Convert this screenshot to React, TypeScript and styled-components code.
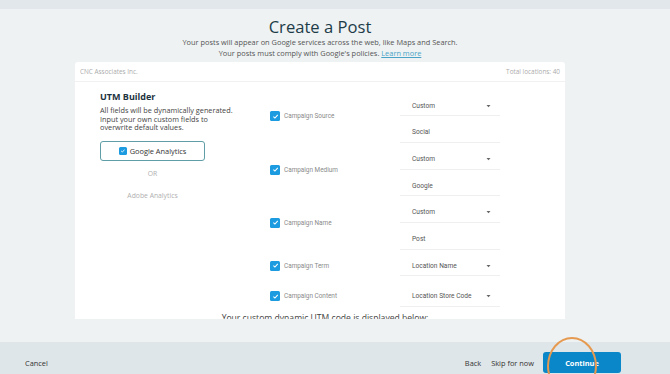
import React from "react";
import styled, { createGlobalStyle } from "styled-components";

const Global = createGlobalStyle`
  html, body { margin: 0; padding: 0; }
  body {
    width: 670px; height: 374px; overflow: hidden;
    background: #eef2f3;
    font-family: "Open Sans", "Liberation Sans", sans-serif;
  }
`;

const Page = styled.div`
  width: 670px; height: 374px; display: flex; flex-direction: column;
  position: relative; overflow: hidden;
`;

const TopBar = styled.div`
  height: 9px; background: #e1e7ea; flex: none;
`;

const Main = styled.main`
  flex: 1; display: flex; flex-direction: column; align-items: center;
  padding: 8px 30px 0 0; min-height: 0;
`;

const Title = styled.h1`
  margin: 0; font-size: 16.6px; line-height: 20px; font-weight: 400;
  color: #1d3c48;
`;

const Sub = styled.p`
  margin: 0; font-size: 7.4px; line-height: 11px; color: #555;
  a { color: #4aa3c6; text-decoration: underline; }
`;

const Card = styled.section`
  margin-top: 2.5px; width: 490px; height: 257px; background: #fff;
  border-radius: 3px 3px 0 0; overflow: hidden; display: flex; flex-direction: column;
`;

const CardHeader = styled.div`
  height: 19px; flex: none; border-bottom: 1px solid #f1f1f1;
  display: flex; align-items: center; justify-content: space-between;
  padding: 0 5px; font-size: 6.4px; color: #ababab;
`;

const Body = styled.div`
  display: flex; padding-top: 8px;
`;

const LeftCol = styled.div`
  width: 170px; padding-left: 25px; flex: none;
`;

const Heading = styled.h2`
  margin: 0; font-size: 9px; line-height: 13px; font-weight: 700; color: #1d3340;
`;

const Desc = styled.p`
  margin: 3.5px 0 0; font-size: 7.3px; line-height: 8.7px; color: #444;
`;

const Options = styled.div`
  width: 105px; display: flex; flex-direction: column; align-items: center;
  margin-top: 9px;
`;

const OptionBox = styled.div`
  width: 105px; height: 20px; box-sizing: border-box;
  border: 1.5px solid #5f9ea6; border-radius: 3px;
  display: flex; align-items: center; justify-content: center; gap: 3px;
  font-size: 7.4px; color: #333;
`;

const OptionText = styled.div<{ $gap: number }>`
  margin-top: ${(p) => p.$gap}px; font-size: 6.8px; line-height: 10px; color: #b0b0b0;
`;

const Table = styled.div`
  display: flex; flex-direction: column;
`;

const Group = styled.div<{ $gap?: number }>`
  display: flex; margin-top: ${(p) => p.$gap ?? 0}px;
`;

const LabelCell = styled.div<{ $single?: boolean }>`
  width: 130px; display: flex;
  align-items: ${(p) => (p.$single ? "flex-start" : "center")};
  padding-top: ${(p) => (p.$single ? "10px" : "0")};
  font-family: Roboto, "Liberation Sans", sans-serif; font-size: 6.4px; color: #8a8a8a;
`;

const LabelInner = styled.div`
  display: flex; align-items: center; gap: 4px; height: 12px;
`;

const Fields = styled.div`
  width: 100px; display: flex; flex-direction: column;
`;

const Field = styled.div`
  height: 26.7px; box-sizing: border-box; border-bottom: 1px solid #efefef;
  padding: 10px 9px 0 12px; display: flex; justify-content: space-between;
  font-family: Roboto, "Liberation Sans", sans-serif; font-size: 6.6px;
  line-height: 12px; color: #555;
`;

const Box = styled.span<{ $size: number }>`
  width: ${(p) => p.$size}px; height: ${(p) => p.$size}px; border-radius: 1.5px;
  background: #1c9be0; display: inline-flex; align-items: center; justify-content: center; flex: none;
`;

const CodeNote = styled.p`
  margin: 5.5px 0 0; text-align: center; font-size: 8.6px; line-height: 11px; color: #444;
  padding-left: 10px;
`;

const Footer = styled.footer`
  height: 32px; flex: none; background: #dfe6e9; box-sizing: border-box;
  display: flex; align-items: center; padding: 10px 49px 1px 25px;
  font-size: 7.4px; color: #333;
`;

const Spacer = styled.div` flex: 1; `;

const TextBtn = styled.span<{ $ml?: number }>`
  margin-left: ${(p) => p.$ml ?? 0}px;
`;

const PrimaryBtn = styled.button`
  margin-left: 9px; width: 78px; height: 21px; border: none; border-radius: 3px;
  background: #0a87c8; color: #fff; font-family: inherit; font-weight: 700;
  font-size: 7.4px; padding: 0; cursor: pointer;
`;

const Annotation = styled.div`
  position: absolute; left: 547px; top: 337px; width: 50px; height: 58px;
  border: 2px solid #e69a50; border-radius: 50%; box-sizing: border-box; pointer-events: none;
`;

const Check = ({ size }: { size: number }) => (
  <Box $size={size}>
    <svg width={size * 0.7} height={size * 0.7} viewBox="0 0 10 10">
      <path d="M2 5.2 L4.2 7.3 L8.2 2.8" fill="none" stroke="#fff" strokeWidth="1.5" />
    </svg>
  </Box>
);

const Caret = () => (
  <svg width="5" height="12" viewBox="0 0 5 12">
    <path d="M0.5 5 L4.5 5 L2.5 7.2 Z" fill="#666" />
  </svg>
);

type Row = { label: string; fields: { text: string; select?: boolean }[]; gap?: number };

const rows: Row[] = [
  { label: "Campaign Source", fields: [{ text: "Custom", select: true }, { text: "Social" }] },
  { label: "Campaign Medium", fields: [{ text: "Custom", select: true }, { text: "Google" }] },
  { label: "Campaign Name", fields: [{ text: "Custom", select: true }, { text: "Post" }] },
  { label: "Campaign Term", fields: [{ text: "Location Name", select: true }] },
  { label: "Campaign Content", fields: [{ text: "Location Store Code", select: true }], gap: 4 },
];

export default function App() {
  return (
    <Page>
      <Global />
      <TopBar />
      <Main>
        <Title>Create a Post</Title>
        <Sub>Your posts will appear on Google services across the web, like Maps and Search.</Sub>
        <Sub>
          Your posts must comply with Google's policies. <a>Learn more</a>
        </Sub>
        <Card>
          <CardHeader>
            <span>CNC Associates Inc.</span>
            <span>Total locations: 40</span>
          </CardHeader>
          <Body>
            <LeftCol>
              <Heading>UTM Builder</Heading>
              <Desc>
                All fields will be dynamically generated.
                <br />
                Input your own custom fields to
                <br />
                overwrite default values.
              </Desc>
              <Options>
                <OptionBox>
                  <Check size={8} />
                  Google Analytics
                </OptionBox>
                <OptionText $gap={8}>OR</OptionText>
                <OptionText $gap={12}>Adobe Analytics</OptionText>
              </Options>
            </LeftCol>
            <Table>
              {rows.map((r) => (
                <Group key={r.label} $gap={r.gap}>
                  <LabelCell $single={r.fields.length === 1}>
                    <LabelInner>
                      <Check size={10} />
                      {r.label}
                    </LabelInner>
                  </LabelCell>
                  <Fields>
                    {r.fields.map((f, i) => (
                      <Field key={i}>
                        <span>{f.text}</span>
                        {f.select && <Caret />}
                      </Field>
                    ))}
                  </Fields>
                </Group>
              ))}
            </Table>
          </Body>
          <CodeNote>Your custom dynamic UTM code is displayed below:</CodeNote>
        </Card>
      </Main>
      <Footer>
        <TextBtn>Cancel</TextBtn>
        <Spacer />
        <TextBtn>Back</TextBtn>
        <TextBtn $ml={10}>Skip for now</TextBtn>
        <PrimaryBtn>Continue</PrimaryBtn>
      </Footer>
      <Annotation />
    </Page>
  );
}
